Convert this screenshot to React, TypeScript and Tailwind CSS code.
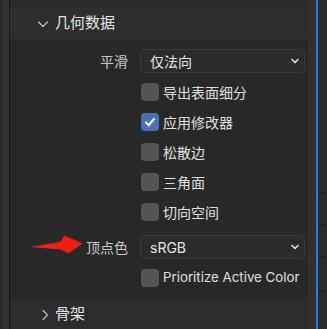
import React from 'react';

const font = { fontFamily: 'Inter, "Noto Sans CJK SC", sans-serif' };

function Chevron({ open }: { open: boolean }) {
    return (
        <svg width="12" height="12" viewBox="0 0 12 12" fill="none" stroke="#bdbdbd" strokeWidth="1.3" strokeLinecap="round" strokeLinejoin="round">
            {open ? <polyline points="1.5 4 6 8.5 10.5 4" /> : <polyline points="4 1.5 8.5 6 4 10.5" />}
        </svg>
    );
}

function Dropdown({ label, value }: { label: string; value: string }) {
    return (
        <div className="flex h-[24px] items-center">
            <div className="w-[118px] shrink-0 text-right text-[14px] text-[#c8c8c8]">{label}</div>
            <div className="ml-[12px] mr-[3px] flex h-[24px] flex-1 items-center justify-between rounded-[5px] border border-[#3a3a3a] bg-[#2b2b2b] pl-[9px] pr-[4px]">
                <span className="text-[14px] text-[#e6e6e6]">{value}</span>
                <svg width="10" height="10" viewBox="0 0 10 10" fill="none" stroke="#e0e0e0" strokeWidth="1.6" strokeLinecap="round" strokeLinejoin="round">
                    <polyline points="2 3.5 5 6.5 8 3.5" />
                </svg>
            </div>
        </div>
    );
}

function Check({ label, checked = false, small = false }: { label: string; checked?: boolean; small?: boolean }) {
    return (
        <div className="flex h-[30px] items-center pl-[131px]">
            <div className={`flex h-[18px] w-[18px] items-center justify-center rounded-[4px] ${checked ? 'bg-[#4772b3]' : 'bg-[#545454]'}`}>
                {checked && (
                    <svg width="12" height="12" viewBox="0 0 12 12" fill="none" stroke="#ffffff" strokeWidth="2" strokeLinecap="round" strokeLinejoin="round">
                        <polyline points="2 6.5 4.8 9.2 10 3" />
                    </svg>
                )}
            </div>
            <span className={`ml-[4px] text-[#e0e0e0] ${small ? 'text-[13.3px]' : 'text-[14px]'}`}>{label}</span>
        </div>
    );
}

export default function App() {
    return (
        <div className="relative flex h-[329px] w-[327px] overflow-hidden bg-[#282828]" style={font}>
            {/* left edge */}
            <div className="flex w-[10px] shrink-0">
                <div className="w-[2px] bg-[#292929]" />
                <div className="w-[7px] bg-[#323232]" />
                <div className="w-[1px] bg-[#181818]" />
            </div>

            {/* panel */}
            <div className="flex w-[298px] shrink-0 flex-col">
                <div className="h-[8px] bg-[#2b2b2b]" />
                <div className="flex h-[31px] items-center bg-[#2e2e2e] pl-[27px]">
                    <Chevron open />
                    <span className="ml-[6px] text-[15px] text-[#e6e6e6]">几何数据</span>
                </div>
                <div className="flex h-[261px] flex-col bg-[#282828] pt-[10px]">
                    <Dropdown label="平滑" value="仅法向" />
                    <div className="mt-[4px]" />
                    <Check label="导出表面细分" />
                    <Check label="应用修改器" checked />
                    <Check label="松散边" />
                    <Check label="三角面" />
                    <Check label="切向空间" />
                    <div className="mt-[8px]" />
                    <Dropdown label="顶点色" value="sRGB" />
                    <div className="mt-[4px]" />
                    <Check label="Prioritize Active Color" small />
                </div>
                <div className="flex flex-1 items-center bg-[#2c2c2c] pl-[29px]">
                    <Chevron open={false} />
                    <span className="ml-[4px] text-[15px] text-[#e6e6e6]">骨架</span>
                </div>
            </div>

            {/* right edge */}
            <div className="w-[8px] shrink-0 bg-[#2f2f2f]" />
            <div className="w-[2px] shrink-0 bg-[#1f7fe0]" />
            <div className="flex flex-1 flex-col gap-[2px] bg-[#232323]">
                <div className="h-[192px] rounded-l-[3px] bg-[#2b2b2b]" />
                <div className="h-[30px] rounded-l-[3px] bg-[#2b2b2b]" />
                <div className="h-[30px] rounded-l-[3px] bg-[#2b2b2b]" />
                <div className="h-[32px] rounded-l-[3px] bg-[#2b2b2b]" />
                <div className="flex-1 rounded-l-[3px] bg-[#2b2b2b]" />
            </div>

            {/* red arrow annotation */}
            <svg className="absolute left-0 top-0" width="327" height="329" viewBox="0 0 327 329">
                <polygon points="30,247 60,242 64.5,235.5 82.5,243.5 68.5,253.5 61,249.5" fill="#f01d17" />
            </svg>
        </div>
    );
}
